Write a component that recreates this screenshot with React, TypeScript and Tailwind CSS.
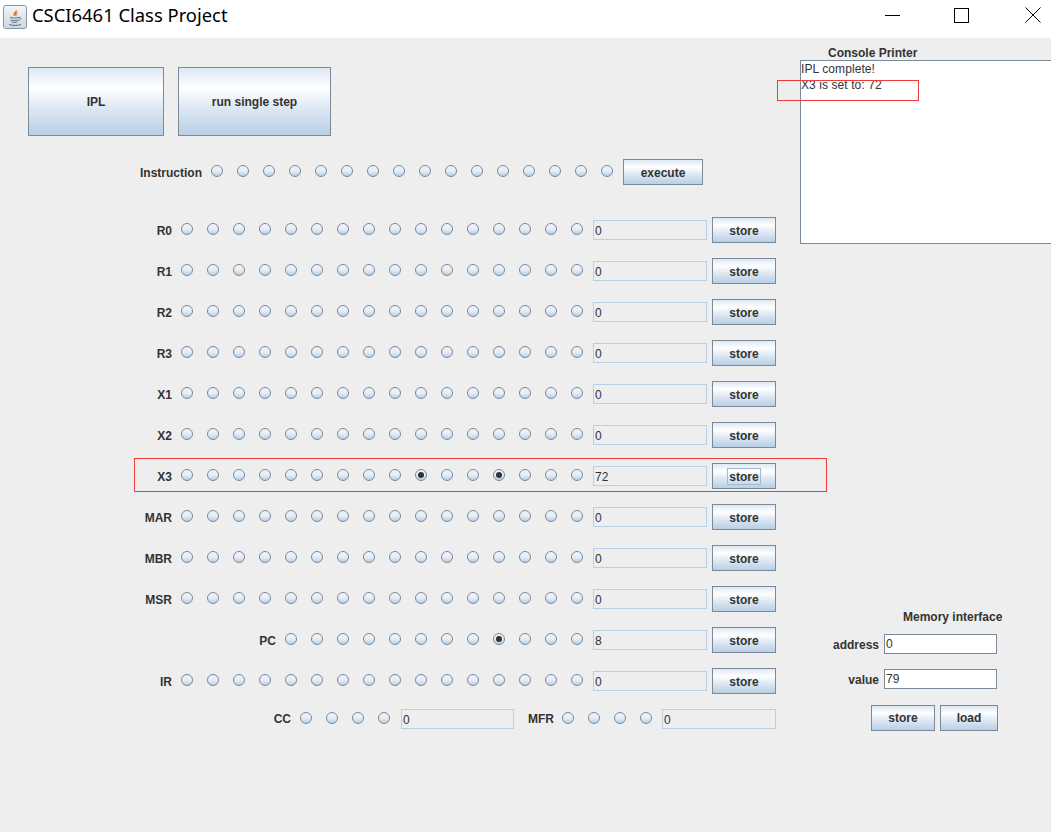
const uiFont = "[font-family:'Liberation_Sans',Arial,sans-serif]"

const REGISTERS = [
  { name: 'R0', bits: 16, value: '0' },
  { name: 'R1', bits: 16, value: '0' },
  { name: 'R2', bits: 16, value: '0' },
  { name: 'R3', bits: 16, value: '0' },
  { name: 'X1', bits: 16, value: '0' },
  { name: 'X2', bits: 16, value: '0' },
  { name: 'X3', bits: 16, value: '72', checked: [9, 12], focused: true },
  { name: 'MAR', bits: 16, value: '0' },
  { name: 'MBR', bits: 16, value: '0' },
  { name: 'MSR', bits: 16, value: '0' },
  { name: 'PC', bits: 12, value: '8', checked: [8] },
  { name: 'IR', bits: 16, value: '0' },
]

function Radio({ checked = false }: { checked?: boolean }) {
  return (
    <div className="w-[26px] pl-[7px] shrink-0 -translate-y-px">
      <div className="w-[12px] h-[12px] rounded-full border border-[#7a8a99] bg-gradient-to-b from-[#eef3f8] via-[#e6eef6] to-[#b8cfe5] flex items-center justify-center">
        {checked && <div className="w-[6px] h-[6px] rounded-full bg-[#333333]" />}
      </div>
    </div>
  )
}

function Radios({ count, checked = [] }: { count: number; checked?: number[] }) {
  return (
    <div className="flex">
      {Array.from({ length: count }).map((_, i) => (
        <Radio key={i} checked={checked.includes(i)} />
      ))}
    </div>
  )
}

function JavaButton({ children, className = '', focused = false }: { children: string; className?: string; focused?: boolean }) {
  return (
    <button className={`border border-[#7a8a99] bg-[linear-gradient(to_bottom,#dde8f3_0%,#ffffff_30%,#dde8f3_60%,#b8cfe5_100%)] text-[12px] font-bold text-[#333333] flex items-center justify-center shrink-0 ${className}`}>
      <span className={focused ? 'block h-[17px] border border-[#a3b8cc] px-px pt-px leading-[15px]' : ''}>{children}</span>
    </button>
  )
}

function ReadonlyField({ value, className = '' }: { value: string; className?: string }) {
  return (
    <div className={`h-[20px] w-[114px] border border-[#b8cfe5] pl-[1px] text-[12px] leading-[20px] text-[#333333] shrink-0 ${className}`}>
      {value}
    </div>
  )
}

function EditField({ value }: { value: string }) {
  return (
    <div className="h-[20px] w-[113px] border border-[#7a8a99] bg-white pl-[1px] text-[12px] leading-[18px] text-[#333333]">
      {value}
    </div>
  )
}

function Label({ children, className = '' }: { children: string; className?: string }) {
  return <span className={`text-[12px] font-bold text-[#333333] whitespace-nowrap ${className}`}>{children}</span>
}

function JavaIcon() {
  return (
    <svg width="24" height="24" viewBox="0 0 24 24" className="shrink-0">
      <defs>
        <linearGradient id="box" x1="0" y1="0" x2="0" y2="1">
          <stop offset="0" stopColor="#f4f6f8" />
          <stop offset="1" stopColor="#cfd6de" />
        </linearGradient>
      </defs>
      <rect x="0.5" y="0.5" width="23" height="23" rx="2.5" fill="url(#box)" stroke="#8b96a3" />
      <path d="M13 4c1 2-3 3.500-2.500 5.500.2 1 1 1.500 1.500 2-.5-1.500 3.500-3 1-7.500z" fill="#e2762a" />
      <path d="M15 7.500c-1 1-2.500 1.500-2 3.500" fill="none" stroke="#e2762a" strokeWidth="1" />
      <path d="M7 12.500c2 .8 7 .8 9 0M7.500 15c2 .7 6 .7 8 0M8.500 17c1.500.5 4.500.5 6 0M6 19.500c3 1.200 9 1.200 12 0" fill="none" stroke="#4d6f8c" strokeWidth="1" />
      <path d="M16 12.500c2-.5 2.500 2 -.5 2.800" fill="none" stroke="#4d6f8c" strokeWidth="1" />
    </svg>
  )
}

function TitleBar() {
  return (
    <div className="h-[38px] bg-white flex items-center shrink-0">
      <div className="pl-[3px] pr-[5px] flex -translate-y-[2px]">
        <JavaIcon />
      </div>
      <span className="flex-1 text-[18.4px] text-black font-['Noto_Sans',sans-serif] -translate-y-[4px]">CSCI6461 Class Project</span>
      <div className="flex items-center -translate-y-[4px]">
        <svg width="15" height="15" viewBox="0 0 15 15">
          <path d="M0 7.500h15" stroke="#000" fill="none" />
        </svg>
        <svg width="15" height="15" viewBox="0 0 15 15" className="ml-[54px]">
          <rect x="0.500" y="0.500" width="14" height="14" stroke="#000" fill="none" />
        </svg>
        <svg width="16" height="16" viewBox="0 0 16 16" className="ml-[56px] mr-[10px]">
          <path d="M.5.500l15 15M15.500.500l-15 15" stroke="#000" fill="none" />
        </svg>
      </div>
    </div>
  )
}

export default function App() {
  return (
    <div className={`relative w-[1051px] h-[832px] overflow-hidden bg-[#eeeeee] flex flex-col ${uiFont}`}>
      <TitleBar />

      <div className="flex-1 flex">
        {/* Registers */}
        <div className="w-[800px] shrink-0 pl-[28px] pt-[29px]">
          <div className="flex gap-[14px]">
            <JavaButton className="w-[136px] h-[69px]">IPL</JavaButton>
            <JavaButton className="w-[153px] h-[69px]">run single step</JavaButton>
          </div>

          <div className="mt-[23px] w-[675px] flex items-center justify-end">
            <Label className="mr-[2px] pt-[2px]">Instruction</Label>
            <Radios count={16} />
            <JavaButton className="w-[80px] h-[26px] ml-[3px] pt-[2px]">execute</JavaButton>
          </div>

          <div className="mt-[32px] w-[748px] flex flex-col gap-[15px]">
            {REGISTERS.map((reg) => (
              <div key={reg.name} className="h-[26px] flex items-center justify-end">
                <Label className="mr-[2px] pt-[2px]">{reg.name}</Label>
                <Radios count={reg.bits} checked={reg.checked} />
                <ReadonlyField value={reg.value} className="ml-[3px]" />
                <JavaButton className={`w-[64px] h-[26px] ml-[5px] ${reg.focused ? '' : 'pt-[2px]'}`} focused={reg.focused}>store</JavaButton>
              </div>
            ))}

            <div className="h-[20px] flex items-center justify-end">
              <Label className="mr-[2px]">CC</Label>
              <Radios count={4} />
              <ReadonlyField value="0" className="ml-[4px] !w-[113px]" />
              <Label className="ml-[14px] mr-[1px]">MFR</Label>
              <Radios count={4} />
              <ReadonlyField value="0" className="ml-[3px]" />
            </div>
          </div>
        </div>

        {/* Console and memory */}
        <div className="flex-1 flex flex-col">
          <div className="pt-[8px] pl-[28px] text-[12px] leading-[14px] font-bold text-[#333333]">Console Printer</div>
          <div className="h-[184px] bg-white border border-r-0 border-[#7a8a99] text-[12px] leading-[16px] text-[#333333] tracking-[0.08px]">
            <div>IPL complete!</div>
            <div>X3 is set to: 72</div>
          </div>

          <div className="mt-[366px] pl-[103px] text-[12px] leading-[14px] font-bold text-[#333333]">Memory interface</div>
          <div className="mt-[10px] flex items-center justify-end w-[197px] gap-[5px]">
            <Label className="pt-[2px]">address</Label>
            <EditField value="0" />
          </div>
          <div className="mt-[15px] flex items-center justify-end w-[197px] gap-[5px]">
            <Label className="pt-[2px]">value</Label>
            <EditField value="79" />
          </div>
          <div className="mt-[16px] flex justify-end w-[198px] gap-[5px]">
            <JavaButton className="w-[64px] h-[26px]">store</JavaButton>
            <JavaButton className="w-[58px] h-[26px]">load</JavaButton>
          </div>
        </div>
      </div>

      {/* Red annotation boxes drawn over the window */}
      <div className="absolute left-[134px] top-[458px] w-[693px] h-[34px] border border-[#f03a3a]" />
      <div className="absolute left-[777px] top-[80px] w-[142px] h-[21px] border border-[#f03a3a]" />
    </div>
  )
}
